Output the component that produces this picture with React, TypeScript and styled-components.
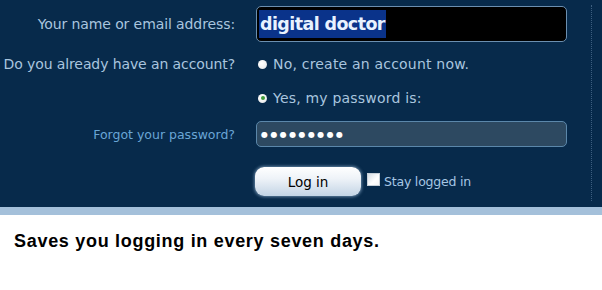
import React from "react";
import styled, { createGlobalStyle } from "styled-components";

const Global = createGlobalStyle`
  html, body { margin: 0; padding: 0; background: #ffffff; }
  body { font-family: "DejaVu Sans", Verdana, sans-serif; }
`;

const Panel = styled.div`
  display: flex;
  height: 207px;
  background: #072a4b;
  box-sizing: border-box;
`;

const Form = styled.form`
  width: 591px;
  display: flex;
  flex-direction: column;
  padding-top: 6px;
  box-sizing: border-box;
`;

const Divider = styled.div`
  margin: 5px 0 6px;
  border-left: 1px dotted #3d5f80;
`;

const Row = styled.div<{ $h: number; $mt?: number }>`
  display: grid;
  grid-template-columns: 235px 311px;
  column-gap: 21px;
  align-items: center;
  height: ${(p) => p.$h}px;
  margin-top: ${(p) => p.$mt ?? 0}px;
`;

const Label = styled.label<{ $link?: boolean }>`
  text-align: right;
  font-size: ${(p) => (p.$link ? 12.5 : 14)}px;
  color: ${(p) => (p.$link ? "#6aa6d6" : "#a9c5df")};
  white-space: nowrap;
  letter-spacing: ${(p) => (p.$link ? "0" : "-0.1px")};
`;

const NameBox = styled.div`
  height: 36px;
  box-sizing: border-box;
  background: #000000;
  border: 1px solid #6b8fb0;
  border-radius: 5px;
  display: flex;
  align-items: center;
  padding-left: 2px;
`;

const Selected = styled.span`
  background: #0a338a;
  color: #e8f2ff;
  font-weight: bold;
  font-size: 17.5px;
  line-height: 28px;
  padding: 0 1px;
  letter-spacing: -0.6px;
`;

const PassBox = styled.div`
  height: 26px;
  box-sizing: border-box;
  background: #2d4961;
  border: 1px solid #5b87aa;
  border-radius: 5px;
  display: flex;
  align-items: center;
  padding-left: 4px;
  color: #ffffff;
  font-size: 8px;
  letter-spacing: 2.4px;
`;

const Choice = styled.div`
  display: flex;
  align-items: center;
  gap: 6px;
  padding-left: 2px;
  font-size: 14px;
  letter-spacing: 0.2px;
  color: #a9c5df;
  white-space: nowrap;
`;

const Radio = styled.span<{ $on?: boolean }>`
  width: 9px;
  height: 9px;
  border-radius: 50%;
  background: radial-gradient(circle at 40% 35%, #ffffff 0%, #f2f2f2 55%, #c9d3dc 100%);
  display: flex;
  align-items: center;
  justify-content: center;
  flex: none;
  &::after {
    content: "";
    width: 4px;
    height: 4px;
    border-radius: 50%;
    background: ${(p) => (p.$on ? "#3f9a3a" : "transparent")};
  }
`;

const Actions = styled.div`
  display: flex;
  align-items: center;
  margin-left: -1px;
`;

const Button = styled.button`
  width: 106px;
  height: 29px;
  border: none;
  border-radius: 9px;
  background: linear-gradient(#ffffff 0%, #eef3f8 40%, #c3d4e5 100%);
  box-shadow: 0 0 3px 1px rgba(170, 200, 230, 0.55);
  font-family: "DejaVu Sans", Verdana, sans-serif;
  font-size: 13.5px;
  color: #000000;
  padding: 0;
`;

const Check = styled.span`
  width: 11px;
  height: 11px;
  margin: -4px 0 0 6px;
  background: linear-gradient(135deg, #d6dde4 0%, #ffffff 60%, #f4f4f4 100%);
  border: 1px solid #c7d0d8;
  flex: none;
`;

const CheckLabel = styled.span`
  margin-left: 4px;
  font-size: 12.5px;
  letter-spacing: -0.2px;
  color: #a6c6e4;
`;

const Band = styled.div`
  height: 8px;
  background: #a4c0da;
`;

const Note = styled.p`
  margin: 16px 0 0 14px;
  font-family: "Liberation Sans", Arial, sans-serif;
  font-weight: bold;
  font-size: 18px;
  letter-spacing: 0.7px;
  color: #000000;
`;

export default function App() {
  return (
    <>
      <Global />
      <Panel>
        <Form>
          <Row $h={36}>
            <Label>Your name or email address:</Label>
            <NameBox>
              <Selected>digital doctor</Selected>
            </NameBox>
          </Row>
          <Row $h={24} $mt={10}>
            <Label>Do you already have an account?</Label>
            <Choice>
              <Radio />
              No, create an account now.
            </Choice>
          </Row>
          <Row $h={24} $mt={10}>
            <Label />
            <Choice>
              <Radio $on />
              Yes, my password is:
            </Choice>
          </Row>
          <Row $h={26} $mt={11}>
            <Label $link>Forgot your password?</Label>
            <PassBox>●●●●●●●●●</PassBox>
          </Row>
          <Row $h={29} $mt={20}>
            <Label />
            <Actions>
              <Button type="button">Log in</Button>
              <Check />
              <CheckLabel>Stay logged in</CheckLabel>
            </Actions>
          </Row>
        </Form>
        <Divider />
      </Panel>
      <Band />
      <Note>Saves you logging in every seven days.</Note>
    </>
  );
}
